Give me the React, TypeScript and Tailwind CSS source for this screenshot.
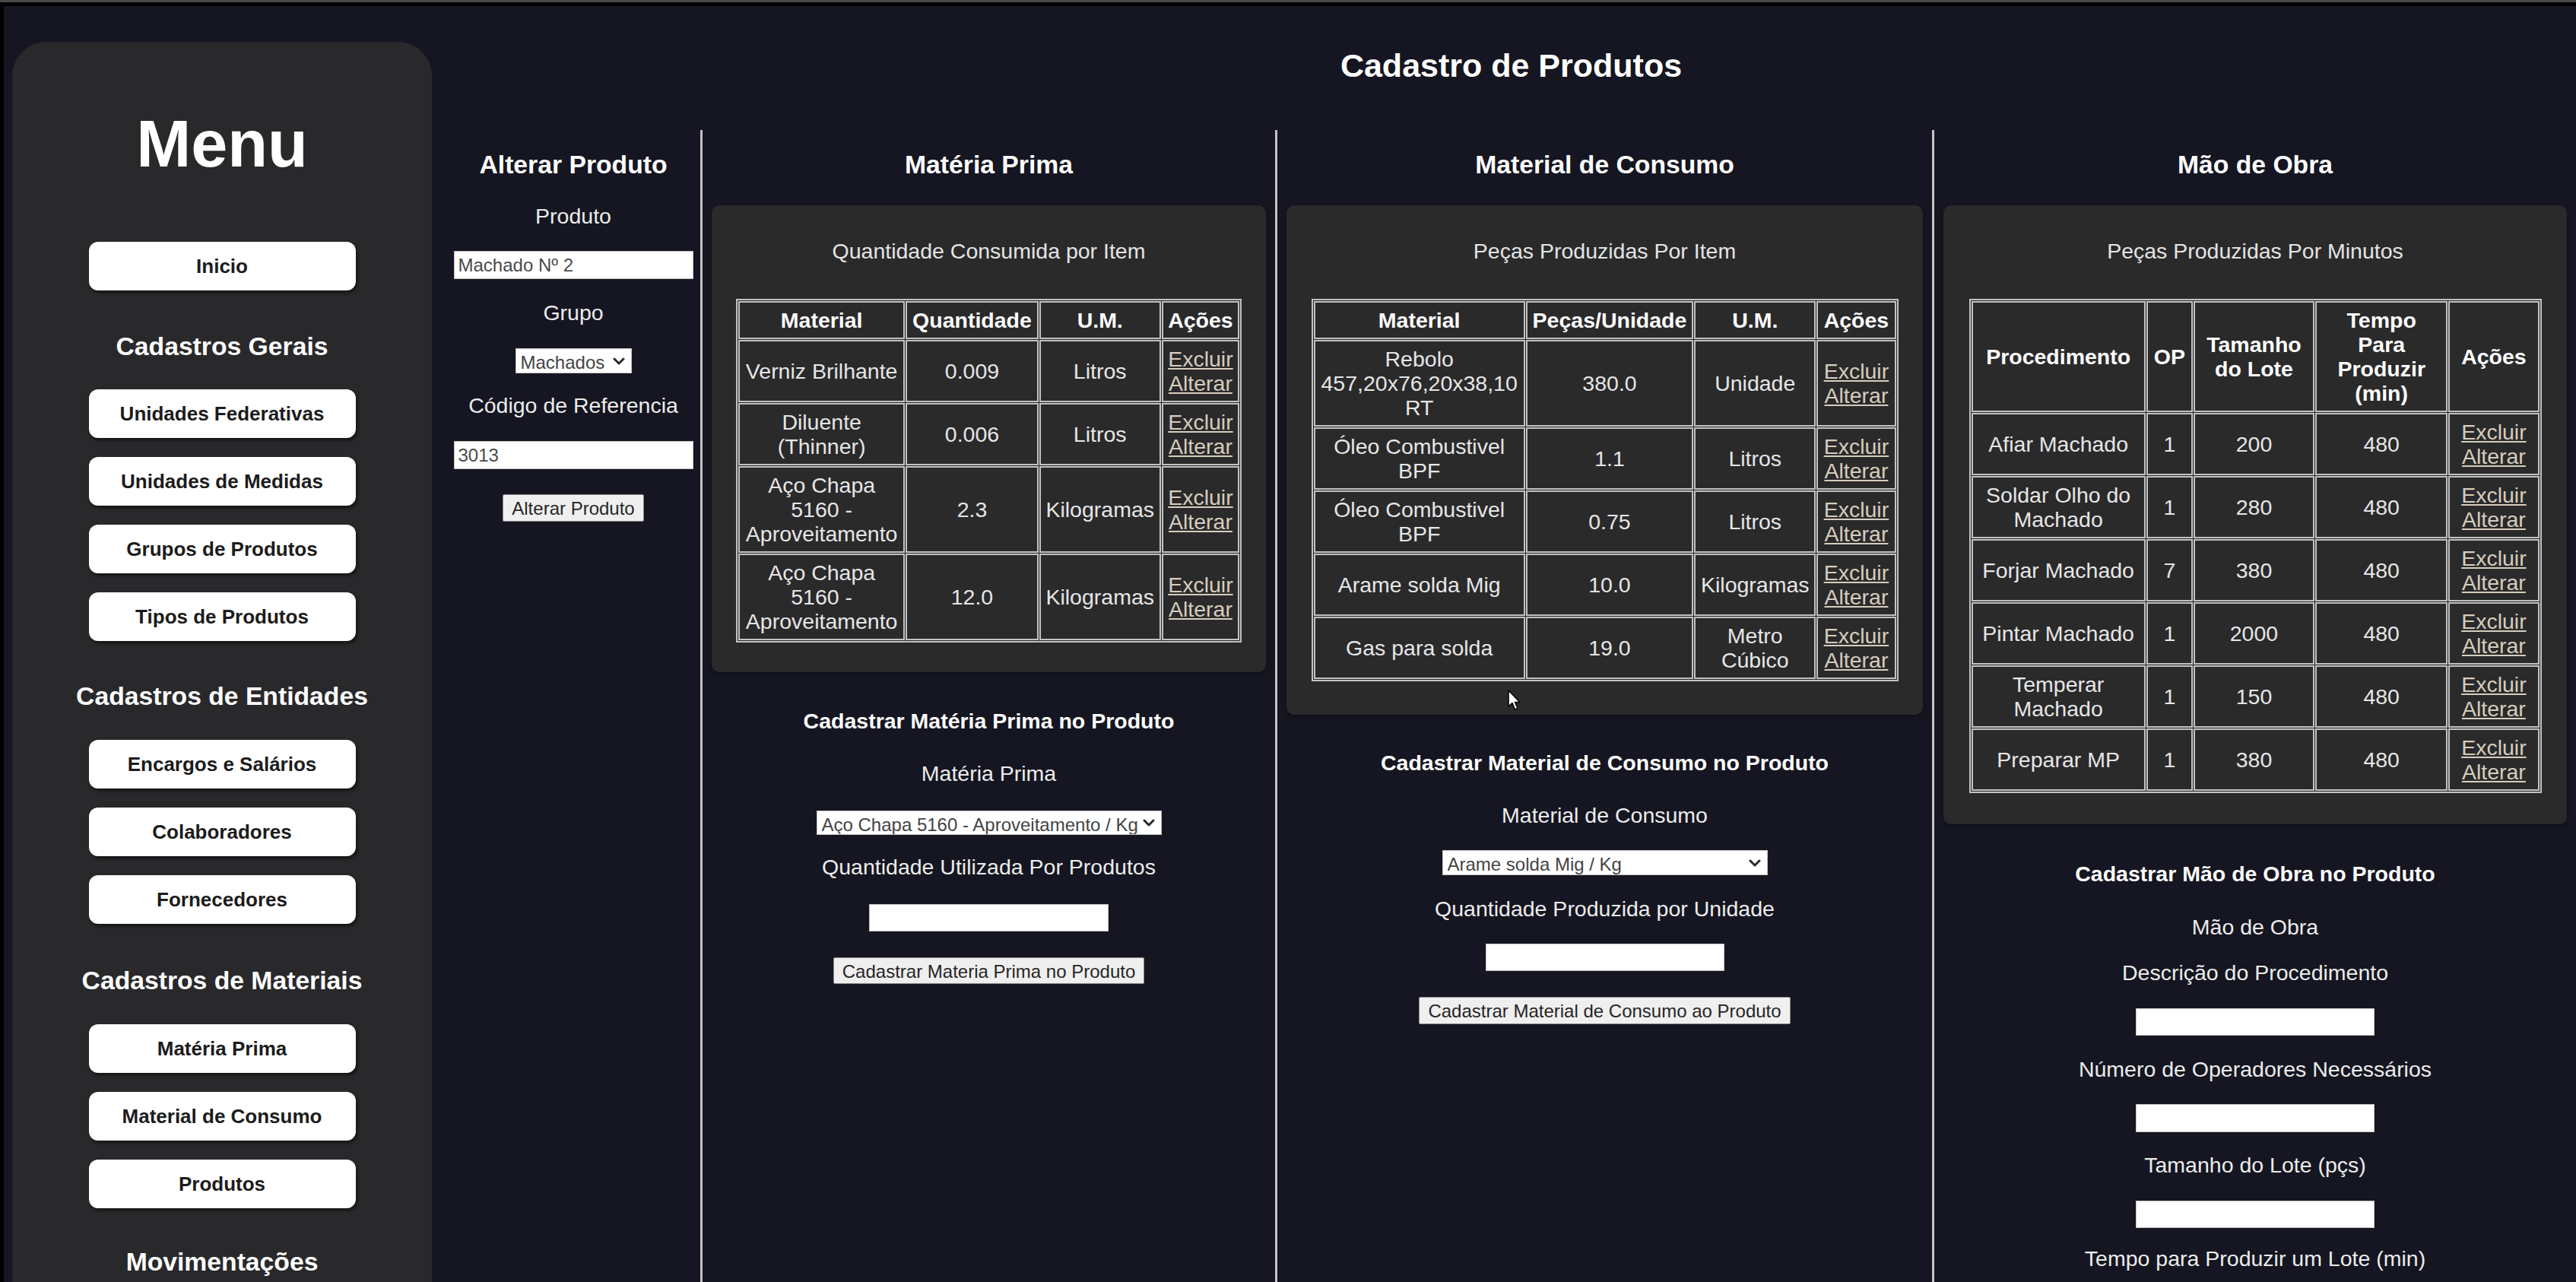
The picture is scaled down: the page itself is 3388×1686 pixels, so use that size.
import React from 'react';

type Col = { label: string; w: string };

const menuSections = [
  {
    title: 'Cadastros Gerais',
    headMt: 'mt-[54px]',
    firstMt: 'mt-[37px]',
    items: ['Unidades Federativas', 'Unidades de Medidas', 'Grupos de Produtos', 'Tipos de Produtos'],
  },
  {
    title: 'Cadastros de Entidades',
    headMt: 'mt-[53px]',
    firstMt: 'mt-[38px]',
    items: ['Encargos e Salários', 'Colaboradores', 'Fornecedores'],
  },
  {
    title: 'Cadastros de Materiais',
    headMt: 'mt-[55px]',
    firstMt: 'mt-[38px]',
    items: ['Matéria Prima', 'Material de Consumo', 'Produtos'],
  },
];

const materiaCols: Col[] = [
  { label: 'Material', w: 'w-[219px]' },
  { label: 'Quantidade', w: 'w-[174px]' },
  { label: 'U.M.', w: 'w-[160px]' },
  { label: 'Ações', w: 'w-[102px]' },
];

const materiaRows = [
  ['Verniz Brilhante', '0.009', 'Litros'],
  ['Diluente (Thinner)', '0.006', 'Litros'],
  ['Aço Chapa 5160 - Aproveitamento', '2.3', 'Kilogramas'],
  ['Aço Chapa 5160 - Aproveitamento', '12.0', 'Kilogramas'],
];

const consumoCols: Col[] = [
  { label: 'Material', w: 'w-[278px]' },
  { label: 'Peças/Unidade', w: 'w-[220px]' },
  { label: 'U.M.', w: 'w-[160px]' },
  { label: 'Ações', w: 'w-[104px]' },
];

const consumoRows = [
  ['Rebolo 457,20x76,20x38,10 RT', '380.0', 'Unidade'],
  ['Óleo Combustivel BPF', '1.1', 'Litros'],
  ['Óleo Combustivel BPF', '0.75', 'Litros'],
  ['Arame solda Mig', '10.0', 'Kilogramas'],
  ['Gas para solda', '19.0', 'Metro Cúbico'],
];

const obraCols: Col[] = [
  { label: 'Procedimento', w: 'w-[229px]' },
  { label: 'OP', w: 'w-[61px]' },
  { label: 'Tamanho do Lote', w: 'w-[159px]' },
  { label: 'Tempo Para Produzir (min)', w: 'w-[174px]' },
  { label: 'Ações', w: 'w-[119px]' },
];

const obraRows = [
  ['Afiar Machado', '1', '200', '480'],
  ['Soldar Olho do Machado', '1', '280', '480'],
  ['Forjar Machado', '7', '380', '480'],
  ['Pintar Machado', '1', '2000', '480'],
  ['Temperar Machado', '1', '150', '480'],
  ['Preparar MP', '1', '380', '480'],
];

const MenuButton = ({ label, className = '' }: { label: string; className?: string }) => (
  <button
    className={`w-[351px] h-[64px] shrink-0 rounded-[12px] bg-white text-[26px] font-bold text-[#1c1c1c] shadow-[2px_3px_4px_rgba(0,0,0,0.55)] ${className}`}
  >
    {label}
  </button>
);

const Sidebar = () => (
  <aside className="ml-[11px] mt-[47px] w-[552px] shrink-0 self-stretch overflow-hidden rounded-t-[45px] bg-[#29292c] flex flex-col items-center pt-[85px]">
    <h1 className="text-[86.4px] leading-[99px] font-bold text-white">Menu</h1>
    <MenuButton label="Inicio" className="mt-[79px]" />
    {menuSections.map((section) => (
      <React.Fragment key={section.title}>
        <h3 className={`${section.headMt} text-[33.7px] leading-[39px] font-bold text-white`}>{section.title}</h3>
        {section.items.map((item, i) => (
          <MenuButton key={item} label={item} className={i === 0 ? section.firstMt : 'mt-[25px]'} />
        ))}
      </React.Fragment>
    ))}
    <h3 className="mt-[51px] text-[33.7px] leading-[39px] font-bold text-white">Movimentações</h3>
  </aside>
);

const Label = ({ children, className = '' }: { children: React.ReactNode; className?: string }) => (
  <p className={`text-[28.5px] leading-[33px] text-[#ececec] ${className}`}>{children}</p>
);

const TextInput = ({ value = '', className = '' }: { value?: string; className?: string }) => (
  <input
    readOnly
    defaultValue={value}
    className={`shrink-0 bg-white border border-[#c4c4c4] px-[5px] text-[24px] text-[#4a4a4a] outline-none ${className}`}
  />
);

const Chevron = () => (
  <svg width="16" height="11" viewBox="0 0 16 11" className="pointer-events-none absolute right-[9px] top-1/2 -translate-y-1/2">
    <path d="M2 2.5 L8 8.5 L14 2.5" fill="none" stroke="#2a2a2a" strokeWidth="3" strokeLinecap="round" strokeLinejoin="round" />
  </svg>
);

const SelectBox = ({ value, className = '' }: { value: string; className?: string }) => (
  <div className={`relative shrink-0 ${className}`}>
    <select
      defaultValue={value}
      className="h-full w-full appearance-none bg-white border border-[#c4c4c4] pl-[6px] pr-[30px] text-[24px] text-[#444444] outline-none"
    >
      <option>{value}</option>
    </select>
    <Chevron />
  </div>
);

const FormButton = ({ label, className = '' }: { label: string; className?: string }) => (
  <button
    className={`shrink-0 rounded-[2px] border border-[#8a8a8a] bg-[#efefef] px-[11px] text-[24px] text-[#262626] ${className}`}
  >
    {label}
  </button>
);

const Actions = () => (
  <>
    <a className="block text-[#d6cdbd] underline">Excluir</a>
    <a className="block text-[#d6cdbd] underline">Alterar</a>
  </>
);

const DataTable = ({ cols, rows, width }: { cols: Col[]; rows: string[][]; width: string }) => (
  <table
    className={`${width} mx-auto table-fixed border-separate border-spacing-[1px] border-2 border-[#c2c2c2] text-[28.5px] leading-[32px]`}
  >
    <thead>
      <tr>
        {cols.map((c) => (
          <th key={c.label} className={`${c.w} border-2 border-[#c2c2c2] px-[5px] py-[7px] font-bold text-white`}>
            {c.label}
          </th>
        ))}
      </tr>
    </thead>
    <tbody>
      {rows.map((row, i) => (
        <tr key={i}>
          {row.map((cell, j) => (
            <td key={j} className="border-2 border-[#c2c2c2] px-[5px] py-[7px] text-center text-[#e6e6e6]">
              {cell}
            </td>
          ))}
          <td className="border-2 border-[#c2c2c2] px-[5px] py-[7px] text-center">
            <Actions />
          </td>
        </tr>
      ))}
    </tbody>
  </table>
);

const Card = ({ subtitle, children, className = '' }: { subtitle: string; children: React.ReactNode; className?: string }) => (
  <div className={`mx-[12px] mt-[34px] self-stretch rounded-[10px] bg-[#2a2a2b] pt-[44px] shadow-[0_2px_6px_rgba(0,0,0,0.35)] ${className}`}>
    <p className="text-center text-[28.5px] leading-[33px] text-[#e4e4e4]">{subtitle}</p>
    <div className="mt-[46px]">{children}</div>
  </div>
);

const ColTitle = ({ children }: { children: React.ReactNode }) => (
  <h3 className="mt-[26px] text-[33.7px] leading-[39px] font-bold text-white">{children}</h3>
);

const SubHeading = ({ children, className = '' }: { children: React.ReactNode; className?: string }) => (
  <h4 className={`text-[28.5px] leading-[33px] font-bold text-white ${className}`}>{children}</h4>
);

const Divider = () => <div className="w-[3px] shrink-0 self-stretch bg-[#c4c4c4]" />;

export default function App() {
  return (
    <div className="relative w-[3388px] h-[1686px] overflow-hidden bg-[#151621] font-['Liberation_Sans',Arial,sans-serif] text-white">
      <div className="h-[3px] bg-[#4a4a4a]" />
      <div className="h-[5px] bg-black" />
      <div className="flex h-[1678px]">
        <div className="w-[5px] shrink-0 bg-black" />
        <Sidebar />

        <main className="ml-[19px] flex flex-1 flex-col">
          <h2 className="mt-[53px] text-center text-[43px] leading-[50px] font-bold text-white">Cadastro de Produtos</h2>

          <div className="mt-[60px] flex flex-1">
            {/* Alterar Produto */}
            <section className="w-[334px] shrink-0 flex flex-col items-center">
              <ColTitle>Alterar Produto</ColTitle>
              <Label className="mt-[32px]">Produto</Label>
              <TextInput value="Machado Nº 2" className="mt-[29px] w-[315px] h-[37px]" />
              <Label className="mt-[28px]">Grupo</Label>
              <SelectBox value="Machados" className="mt-[30px] w-[153px] h-[33px]" />
              <Label className="mt-[26px]">Código de Referencia</Label>
              <TextInput value="3013" className="mt-[30px] w-[315px] h-[37px]" />
              <FormButton label="Alterar Produto" className="mt-[33px] h-[36px]" />
            </section>

            <Divider />

            {/* Matéria Prima */}
            <section className="w-[753px] shrink-0 flex flex-col items-center">
              <ColTitle>Matéria Prima</ColTitle>
              <Card subtitle="Quantidade Consumida por Item" className="pb-[39px]">
                <DataTable cols={materiaCols} rows={materiaRows} width="w-[665px]" />
              </Card>
              <SubHeading className="mt-[48px]">Cadastrar Matéria Prima no Produto</SubHeading>
              <Label className="mt-[36px]">Matéria Prima</Label>
              <SelectBox value="Aço Chapa 5160 - Aproveitamento / Kg" className="mt-[32px] w-[454px] h-[32px]" />
              <Label className="mt-[26px]">Quantidade Utilizada Por Produtos</Label>
              <TextInput className="mt-[32px] w-[315px] h-[36px]" />
              <FormButton label="Cadastrar Materia Prima no Produto" className="mt-[34px] h-[35px]" />
            </section>

            <Divider />

            {/* Material de Consumo */}
            <section className="w-[861px] shrink-0 flex flex-col items-center">
              <ColTitle>Material de Consumo</ColTitle>
              <Card subtitle="Peças Produzidas Por Item" className="pb-[44px]">
                <DataTable cols={consumoCols} rows={consumoRows} width="w-[772px]" />
              </Card>
              <SubHeading className="mt-[47px]">Cadastrar Material de Consumo no Produto</SubHeading>
              <Label className="mt-[36px]">Material de Consumo</Label>
              <SelectBox value="Arame solda Mig / Kg" className="mt-[29px] w-[428px] h-[33px]" />
              <Label className="mt-[28px]">Quantidade Produzida por Unidade</Label>
              <TextInput className="mt-[29px] w-[314px] h-[36px]" />
              <FormButton label="Cadastrar Material de Consumo ao Produto" className="mt-[34px] h-[36px]" />
            </section>

            <Divider />

            {/* Mão de Obra */}
            <section className="flex-1 flex flex-col items-center">
              <ColTitle>Mão de Obra</ColTitle>
              <Card subtitle="Peças Produzidas Por Minutos" className="pb-[41px]">
                <DataTable cols={obraCols} rows={obraRows} width="w-[753px]" />
              </Card>
              <SubHeading className="mt-[49px]">Cadastrar Mão de Obra no Produto</SubHeading>
              <Label className="mt-[37px]">Mão de Obra</Label>
              <Label className="mt-[27px]">Descrição do Procedimento</Label>
              <TextInput className="mt-[30px] w-[314px] h-[36px]" />
              <Label className="mt-[28px]">Número de Operadores Necessários</Label>
              <TextInput className="mt-[29px] w-[314px] h-[37px]" />
              <Label className="mt-[27px]">Tamanho do Lote (pçs)</Label>
              <TextInput className="mt-[30px] w-[314px] h-[36px]" />
              <Label className="mt-[24px]">Tempo para Produzir um Lote (min)</Label>
            </section>
          </div>
        </main>
      </div>

      {/* mouse pointer */}
      <svg width="20" height="28" viewBox="0 0 20 28" className="absolute left-[1983px] top-[907px]">
        <path d="M1 1 L1 22 L6 17.5 L9.5 26 L13 24.5 L9.5 16.5 L16 16.5 Z" fill="#ffffff" stroke="#000000" strokeWidth="1.5" strokeLinejoin="round" />
      </svg>
    </div>
  );
}
